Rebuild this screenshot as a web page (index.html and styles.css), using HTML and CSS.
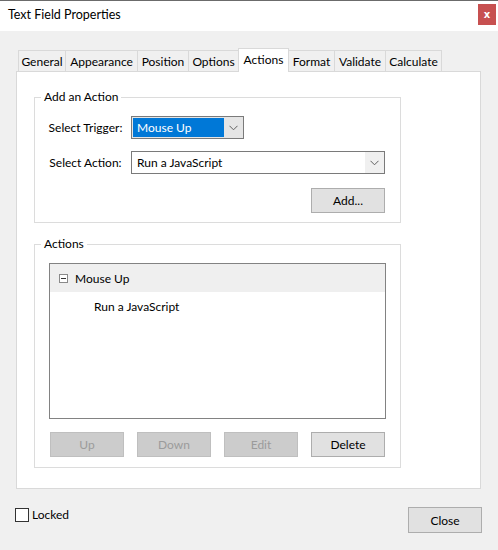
FILE: index.html
```html
<!DOCTYPE html>
<html>
<head>
<meta charset="utf-8">
<link rel="stylesheet" href="styles.css">
</head>
<body>
<div class="window">
  <div class="titlebar">
    <span class="title">Text Field Properties</span>
    <span class="close-x">x</span>
  </div>
  <div class="tabs">
    <div class="tab t-general">General</div>
    <div class="tab t-appearance">Appearance</div>
    <div class="tab t-position">Position</div>
    <div class="tab t-options">Options</div>
    <div class="tab t-actions active">Actions</div>
    <div class="tab t-format">Format</div>
    <div class="tab t-validate">Validate</div>
    <div class="tab t-calculate">Calculate</div>
  </div>
  <div class="panel">
    <div class="group g-add">
      <span class="legend">Add an Action</span>
      <div class="row">
        <span class="label">Select Trigger:</span>
        <div class="combo trigger">
          <span class="sel">Mouse Up</span>
          <span class="arrow"><svg width="9" height="6" viewBox="0 0 9 6"><polyline points="0.5,0.8 4.5,4.8 8.5,0.8" fill="none" stroke="#606060" stroke-width="1"/></svg></span>
        </div>
      </div>
      <div class="row row2">
        <span class="label">Select Action:</span>
        <div class="combo action">
          <span class="val">Run a JavaScript</span>
          <span class="arrow"><svg width="9" height="6" viewBox="0 0 9 6"><polyline points="0.5,0.8 4.5,4.8 8.5,0.8" fill="none" stroke="#606060" stroke-width="1"/></svg></span>
        </div>
      </div>
      <div class="addrow">
        <div class="btn">Add...</div>
      </div>
    </div>
    <div class="group g-actions">
      <span class="legend">Actions</span>
      <div class="tree">
        <div class="tree-head">
          <span class="minus"><span class="minus-line"></span></span>
          <span>Mouse Up</span>
        </div>
        <div class="tree-child">Run a JavaScript</div>
      </div>
      <div class="btnrow">
        <div class="btn disabled">Up</div>
        <div class="btn disabled">Down</div>
        <div class="btn disabled">Edit</div>
        <div class="btn">Delete</div>
      </div>
    </div>
  </div>
  <div class="footer">
    <label class="locked"><span class="checkbox"></span><span>Locked</span></label>
    <div class="btn close-btn">Close</div>
  </div>
</div>
</body>
</html>
```
FILE: styles.css
```css
* { box-sizing: border-box; }
html, body { margin: 0; padding: 0; }
body {
  background: #f0f0f0;
  font-family: "Lato", "Noto Sans", sans-serif;
  font-size: 12px;
  color: #000;
}
.window {
  width: 498px;
  height: 550px;
  background: #f0f0f0;
  overflow: hidden;
}
.titlebar {
  height: 31px;
  background: #fff;
  border-top: 1px solid #6b6b6b;
  display: flex;
  align-items: center;
  justify-content: space-between;
  padding-left: 8px;
  padding-right: 2px;
}
.title {
  font-family: "Lato", sans-serif;
  font-size: 12.5px;
  margin-top: -3px;
}
.close-x {
  width: 18px;
  height: 21px;
  background: #c75050;
  color: #fff;
  font-family: "DejaVu Sans", sans-serif;
  font-weight: bold;
  font-size: 10px;
  display: flex;
  align-items: center;
  justify-content: center;
  margin-top: -4px;
}
.tabs {
  display: flex;
  align-items: flex-end;
  height: 23px;
  margin-top: 17px;
  margin-left: 18px;
  position: relative;
  z-index: 2;
}
.tab {
  height: 21px;
  border: 1px solid #d9d9d9;
  border-bottom: none;
  border-left: none;
  background: #f0f0f0;
  display: flex;
  align-items: center;
  justify-content: center;
  font-size: 12px;
}
.tab:first-child { border-left: 1px solid #d9d9d9; }
.tab.active {
  height: 24px;
  margin-bottom: -1px;
  background: #fff;
  border-left: 1px solid #d9d9d9;
  align-items: flex-start;
  padding-top: 3px;
}
.t-general { width: 48px; }
.t-appearance { width: 72px; }
.t-position { width: 51px; }
.t-options { width: 50px; }
.t-actions { width: 51px; margin-left: -1px; }
.t-format { width: 46px; border-left: none; }
.t-validate { width: 51px; }
.t-calculate { width: 56px; }

.panel {
  margin-left: 16px;
  width: 465px;
  height: 418px;
  background: #fff;
  border: 1px solid #d9d9d9;
  padding: 25px 0 0 17px;
}
.group {
  position: relative;
  width: 367px;
  border: 1px solid #dcdcdc;
  padding: 18px 15px 0 0;
}
.legend {
  position: absolute;
  top: -8px;
  left: 6px;
  padding: 0 3px;
  background: #fff;
  line-height: 14px;
}
.g-add { height: 126px; }
.g-actions { height: 224px; margin-top: 21px; padding-left: 14px; }
.row {
  display: flex;
  align-items: center;
  height: 23px;
}
.row2 { margin-top: 12px; }
.label {
  width: 96px;
  padding-left: 5px;
  text-align: center;
}
.combo {
  height: 23px;
  border: 1px solid #7a7a7a;
  display: flex;
  align-items: stretch;
}
.trigger {
  width: 113px;
  background: #e5e5e5;
  padding: 1px 0 1px 1px;
}
.trigger .sel {
  width: 91px;
  background: #0078d7;
  color: #fff;
  padding-left: 4px;
  display: flex;
  align-items: center;
}
.action {
  width: 254px;
  background: #fff;
}
.action .val {
  flex: 1;
  display: flex;
  align-items: center;
  padding-left: 5px;
}
.arrow {
  width: 19px;
  display: flex;
  align-items: center;
  justify-content: center;
}
.trigger .arrow { flex: 1; }
.action .arrow { background: #f0f0f0; }
.addrow {
  display: flex;
  justify-content: flex-end;
  margin-top: 14px;
}
.btn {
  width: 74px;
  height: 25px;
  background: #e1e1e1;
  border: 1px solid #adadad;
  display: flex;
  align-items: center;
  justify-content: center;
}
.btn.disabled {
  background: #cccccc;
  border-color: #bfbfbf;
  color: #9b9b9b;
}
.tree {
  width: 337px;
  height: 156px;
  border: 1px solid #828282;
}
.tree-head {
  height: 28px;
  background: #efefef;
  display: flex;
  align-items: center;
  padding-left: 9px;
}
.minus {
  width: 9px;
  height: 9px;
  border: 1px solid #8a8a8a;
  background: #fff;
  margin-right: 7px;
  display: flex;
  align-items: center;
  justify-content: center;
}
.minus-line {
  width: 5px;
  height: 1px;
  background: #333;
}
.tree-child {
  padding-left: 44px;
  padding-top: 8px;
  line-height: 14px;
}
.btnrow {
  display: flex;
  gap: 13px;
  margin-top: 13px;
  padding-left: 1px;
}
.footer {
  display: flex;
  justify-content: space-between;
  align-items: flex-start;
  margin-top: 18px;
  padding: 0 16px 0 15px;
}
.locked {
  display: flex;
  align-items: center;
  gap: 3px;
}
.checkbox {
  width: 14px;
  height: 14px;
  border: 1px solid #333;
  background: #fff;
}
.close-btn { height: 26px; }
```
